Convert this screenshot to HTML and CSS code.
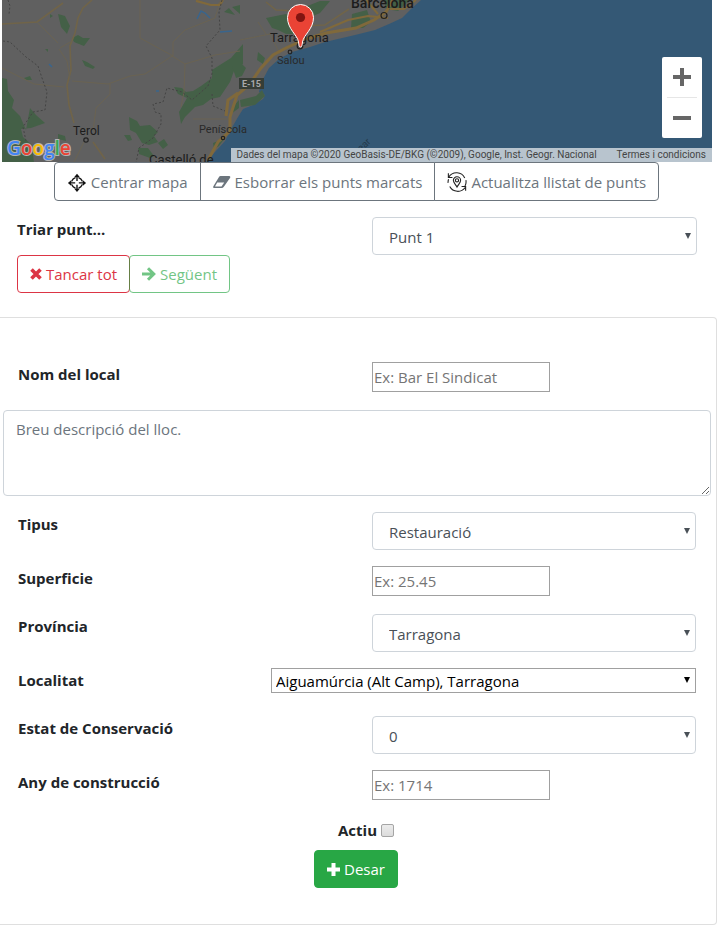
FILE: index.html
```html
<!DOCTYPE html>
<html lang="ca">
<head>
<meta charset="utf-8">
<meta name="viewport" content="width=device-width, initial-scale=1">
<title>Punts</title>
<link rel="stylesheet" href="styles.css">
</head>
<body>
<section class="map" aria-label="Mapa">
  <svg class="map-canvas" viewBox="2 0 710 162" preserveAspectRatio="xMinYMin slice">
    <rect x="2" width="1400" height="400" fill="#606060"/>
    <path fill="#345875" d="M206 162l9-10 10-11 5-10 8-14 5-8 10-4 10-6 2-4-6-3 2-9 8-15 10-9 13-7 18-5 15-5 30-7 20-5 14-6 13-6 9-9 10-9H1402V400H206z"/>
    <g fill="#446047">
      <path d="M2 78l5 1 1 12 6 9-2 8 8 8 6 14 4-22 6 7 9 8-14 5-10 1 2 8 9 8 2 18H2z"/>
      <path d="M58 14l7 2 5 10-3 8-6-7zM50 14l3 2-3 2zM72 38l6-3 5 3 7 0-6 8-10-4zM82 60l5 2 8 5-2 2-8-3zM24 78l6-2 2 4h-6zM45 49h3v3z"/>
      <path d="M174 87l8 1 4 4 7-1 8-5 11-8 0-8 11-7 8-5 12-14v20l-8 4-5 14-10 15-9 2-8 6-8 2-10 10-4 7-2-12 8-14-9-4z"/>
      <path d="M129 117l8 4 3 5 10-1 8 7-4 4 4 6-9 3-7-2-6-10-6-3zM124 135l6 0 2 5-4 1zM158 143l6-4 4 6-5 4zM138 148l10 0 6 8-4 2-11-4zM58 134l7 2 1 5-8-2z"/>
      <path d="M224 12l5-4 6 7zM232 7l8-2v9zM266 18l20-4 12 4 2 16-14 0-8-4-6-2zM300 9l20-8h10l-10 12-14 6zM352 14l15-4 4 12-8 6-12 0zM384 0h26l-12 11-12-2zM232 66l8-4 6 6-4 8-6 2zM258 52l7 6-2 6-6-4zM240 100l16-4 6-6 3 6-10 9-14 2zM232 108l7-8v8l-8 6zM213 143l12-5-6 8-5 3z"/>
    </g>
    <g fill="none" stroke="#706449" stroke-width="1">
      <path stroke-width="1.6" d="M92 0l-9 8-5 10-3 15-5 13 1 24-4 15 2 20 5 18M93 142l12 17M2 24l35-2 26-19M196 0l14 5 8 0 4-5M266 2l10 8 24 1M300 26l25-1 24-16"/>
      <path stroke="#6a6352" d="M37 22l21 21M60 48l12-7M59 49l8 12 3 18M140 0v38l33 18 0-14 12-12 30-12 5-16M172 56l13 8-1 28-3 15M172 56l-27 18-15 2-22 8-36-3M2 68l32 16 30 3M110 84v10l-14 14-3 23M185 64l30-9 25-4M193 119l36 0M84 142l-10 20M240 40l30-6 10 20M258 22l8 12"/>
    </g>
    <path fill="none" stroke="#80693b" stroke-width="3" d="M208 160l10-18 12-11 0-14 7-22 12-10 12-17 12-13 13-7 20-9 20-6 30-5 18-8 12-8 8-14M226 116l2-16 10-7"/>
    <path fill="none" stroke="#80693b" stroke-width="2" d="M196 1l15 4h9l3-5M320 32l28-12 20-4 20 2M390 9l14 0 12-9M366 0l12 14"/>
    <path fill="none" stroke="#444" stroke-width="1" stroke-dasharray="2 2" d="M8 0l2 6-1 8M3 41l7 1 16 15 12 9 4 12 5 14-2 18-12 2-10 15 3 14M222 0l-3 12 1 18-14 16 6 12 0 16-4 12-16 14-10-8-15-4-4 14-10 2 2 8 6 2 0 10-8 14-14 10-4 20M212 94l1 12 12 5"/>
    <g fill="none" stroke="#39658d" stroke-width="1.5"><path d="M197 19l4-8 4 2 5 5M220 32l12-1M49 64l3 3M156 91l3 0"/></g>
    <g fill="none" stroke="#222" stroke-width="1.2"><circle cx="86" cy="140" r="2.2"/><circle cx="223" cy="138" r="1.7"/><circle cx="290" cy="52" r="1.8"/><circle cx="300" cy="46" r="2.8"/><circle cx="384" cy="15.500" r="3"/></g>
    <rect x="239" y="78" width="25" height="11" fill="#363d36"/>
    <g class="map-names">
      <text x="242" y="87" class="road">E-15</text>
      <text x="73" y="135" class="town">Terol</text>
      <text x="199" y="133" class="small">Peníscola</text>
      <text x="277" y="64" class="small">Salou</text>
      <text x="270" y="42" class="city">Tarragona</text>
      <text x="351" y="8" class="city strong">Barcelona</text>
      <text x="149" y="164" class="city">Castelló de</text>
      <text x="361" y="152" class="sea" transform="rotate(-43 361 152)">ear</text>
    </g>
    <path fill="#ea4335" stroke="#fff" stroke-width="1" d="M300.500 47c-1.500 0-1.500-2-2-5-1-7-11-13-11-24.500a13 13 0 0 1 26 0C313.500 29 303.500 35 302.500 42c-.5 3-.5 5-2 5z"/>
    <circle cx="300.500" cy="17.500" r="4.600" fill="#811411"/>
    <text class="logo" x="7" y="155"><tspan fill="#4285f4">G</tspan><tspan fill="#ea4335">o</tspan><tspan fill="#fbbc05">o</tspan><tspan fill="#4285f4">g</tspan><tspan fill="#34a853">l</tspan><tspan fill="#ea4335">e</tspan></text>
  </svg>
  <div class="zoom">
    <button type="button" aria-label="Amplia"><svg width="18" height="18"><path d="M7 0h4v7h7v4h-7v7H7v-7H0V7h7z"/></svg></button>
    <button type="button" aria-label="Redueix"><svg width="18" height="18"><path d="M0 7h18v4H0z"/></svg></button>
  </div>
  <div class="credits"><span>Dades del mapa ©2020 GeoBasis-DE/BKG (©2009), Google, Inst. Geogr. Nacional</span><a href="#">Termes i condicions</a></div>
</section>

<div class="toolbar">
  <button type="button"><svg width="20" height="20" viewBox="-1 -2 22 22"><g fill="none" stroke="#111" stroke-width="1.500"><circle cx="10" cy="10" r="6"/></g><path stroke="#fff" stroke-width="3" d="M10 2v5M10 13v5M2 10h5M13 10h5"/><path stroke="#111" stroke-width="1.500" d="M10 2v6M10 12v6M2 10h6M12 10h6"/><path fill="#111" d="M10 0l3 3.500H7zM10 20l3-3.500H7zM0 10l3.500-3v6zM20 10l-3.500-3v6z"/></svg>Centrar mapa</button>
  <button type="button"><svg width="18" height="14" viewBox="0 0 18 14"><path fill="#6c757d" d="M7.500 1H16q2 0 1 2l-6 8.500Q10 13 8.500 13H1q-1.500 0-.5-2L6 2q.5-1 1.500-1z"/><path fill="#fff" d="M4.200 7.500h7L8.500 11.500H2z"/></svg>Esborrar els punts marcats</button>
  <button type="button"><svg width="20" height="20" viewBox="0 0 22 22" fill="none" stroke="#222" stroke-width="1.200"><path d="M2 5.500a10 10 0 0 1 17.500 1M20.800 9a10 10 0 0 1-1 6.500M20 17a10 10 0 0 1-17-1M1.200 12a10 10 0 0 1 .5-4M1.500 1.500v4.500H6M20.500 20.500V16H16"/><path d="M11 16.500c-1.500-3-4-4.500-4-7.300a4 4 0 0 1 8 0c0 2.800-2.500 4.300-4 7.300z"/><circle cx="11" cy="9.200" r="1.800"/></svg>Actualitza llistat de punts</button>
</div>

<div class="picker">
  <div>
    <label for="punt">Triar punt...</label>
    <div class="actions">
      <button type="button" class="btn danger"><svg width="12" height="12" viewBox="0 0 12 12"><path fill="none" stroke="currentColor" stroke-width="3.600" d="M1.500 1.500l9 9M10.500 1.500l-9 9"/></svg>Tancar tot</button><button type="button" class="btn next" disabled><svg width="14" height="14" viewBox="0 0 14 14"><path fill="none" stroke="currentColor" stroke-width="3" d="M0 7h11M6 1.200L11.800 7 6 12.800"/></svg>Següent</button>
    </div>
  </div>
  <div class="control"><div class="select"><select id="punt"><option>Punt 1</option></select></div></div>
</div>

<form class="card">
  <div class="row"><label for="nom">Nom del local</label><div class="control"><input type="text" id="nom" placeholder="Ex: Bar El Sindicat"></div></div>
  <textarea aria-label="Descripció" placeholder="Breu descripció del lloc."></textarea>
  <div class="row"><label for="tipus">Tipus</label><div class="control"><div class="select"><select id="tipus"><option>Restauració</option></select></div></div></div>
  <div class="row"><label for="sup">Superficie</label><div class="control"><input type="text" id="sup" placeholder="Ex: 25.45"></div></div>
  <div class="row"><label for="prov">Província</label><div class="control"><div class="select"><select id="prov"><option>Tarragona</option></select></div></div></div>
  <div class="row wide"><label for="loc">Localitat</label><div class="select plain"><select id="loc"><option>Aiguamúrcia (Alt Camp), Tarragona</option></select></div></div>
  <div class="row"><label for="estat">Estat de Conservació</label><div class="control"><div class="select"><select id="estat"><option>0</option></select></div></div></div>
  <div class="row"><label for="any">Any de construcció</label><div class="control"><input type="text" id="any" placeholder="Ex: 1714"></div></div>
  <div class="submit">
    <div class="check"><label for="actiu">Actiu</label><input type="checkbox" id="actiu"></div>
    <button type="button" class="btn save"><svg width="13" height="13" viewBox="0 0 13 13"><path fill="currentColor" d="M4.500 0h4v4.500H13v4H8.500V13h-4V8.500H0v-4h4.500z"/></svg>Desar</button>
  </div>
</form>
</body>
</html>
```
FILE: styles.css
```css
* { box-sizing: border-box; }
body {
  margin: 0;
  padding-right: 4px;
  background: #fff;
  color: #212529;
  font: 15px/24px "Open Sans", "Noto Sans", sans-serif;
}
button, input, select, textarea { font: inherit; }
button { cursor: pointer; }
label { font-weight: 700; }

.map {
  position: relative;
  height: 162px;
  margin: 0 5px 0 2px;
  overflow: hidden;
  font-family: Roboto, sans-serif;
}
.map-canvas { display: block; width: 100%; height: 100%; }
.map-names { fill: #1c1c1c; }
.town { font-size: 12px; }
.small { font-size: 11px; fill: #292929; }
.city { font-size: 13px; }
.strong { font-size: 14px; font-weight: 500; }
.sea { font-size: 10px; fill: #24394a; }
.road { font-size: 9px; font-weight: 700; fill: #aaa; }
.logo {
  font: 600 19px "Open Sans", sans-serif;
  stroke: #b4b4b4;
  stroke-width: 2px;
  paint-order: stroke;
}
.zoom {
  position: absolute;
  right: 10px;
  top: 57px;
  width: 40px;
  padding: 0 5px;
  background: #fff;
  border-radius: 2px;
}
.zoom button {
  display: grid;
  place-items: center;
  width: 100%;
  height: 40px;
  padding: 0;
  border: 0;
  background: none;
}
.zoom button + button { height: 41px; border-top: 1px solid #e6e6e6; }
.zoom path { fill: #666; }
.credits {
  position: absolute;
  right: 0;
  bottom: 0;
  display: flex;
  gap: 20px;
  padding: 0 6px 0 5px;
  background: #b8c4ce;
  color: #444;
  font-size: 10px;
  line-height: 14px;
  white-space: nowrap;
}
.credits a { color: inherit; text-decoration: none; }

.toolbar { display: flex; justify-content: center; padding-right: 4px; }
.toolbar button {
  display: flex;
  align-items: center;
  gap: 4px;
  height: 39px;
  padding: 0 12px;
  border: 1px solid #6c757d;
  background: #fff;
  color: #6c757d;
  white-space: nowrap;
}
.toolbar button + button { margin-left: -1px; }
.toolbar button:first-child { border-radius: 4px 0 0 4px; }
.toolbar button:last-child { border-radius: 0 4px 4px 0; }

.picker {
  display: grid;
  grid-template-columns: 1fr 1fr;
  padding: 16px 20px 24px 17px;
}
.picker label { display: block; }
.actions { display: flex; margin-top: 14px; }
.btn {
  display: inline-flex;
  align-items: center;
  gap: 4px;
  height: 38px;
  padding: 0 12px;
  border: 1px solid;
  border-radius: 4px;
  background: #fff;
  white-space: nowrap;
}
.danger { color: #dc3545; }
.next { margin-left: -1px; color: #28a745; opacity: .65; }
.save { background: #28a745; border-color: #28a745; color: #fff; }

.control { padding-left: 15px; }
.select { position: relative; }
.select::after {
  content: "";
  position: absolute;
  right: 6px;
  top: 16px;
  border: solid transparent;
  border-width: 6px 3px 0;
  border-top-color: #495057;
  pointer-events: none;
}
.select select {
  display: block;
  appearance: none;
  width: 100%;
  height: 38px;
  padding: 2px 16px 0;
  border: 1px solid #ced4da;
  border-radius: 4px;
  background: #fff;
  color: #495057;
}
.plain::after { top: 9px; border-top-color: #000; }
.plain select {
  height: 25px;
  padding: 0 4px;
  border-color: #a0a0a0;
  border-radius: 0;
  color: #000;
}

.card {
  display: flex;
  flex-direction: column;
  gap: 16px;
  padding: 44px 0 36px;
  border: 1px solid #dfdfdf;
  border-left: 0;
  border-radius: 0 4px 4px 0;
}
.row {
  display: grid;
  grid-template-columns: 1fr 1fr;
  align-items: start;
  min-height: 32px;
  padding: 0 20px 0 18px;
}
.wide { grid-template-columns: 253px 1fr; }
.row input {
  display: block;
  width: 178px;
  height: 30px;
  padding: 1px;
  border: 1px solid #a0a0a0;
}
.row input::placeholder { color: #757575; }
textarea {
  display: block;
  height: 86px;
  margin: 0 5px 0 3px;
  padding: 6px 12px;
  border: 1px solid #ced4da;
  border-radius: 4px;
  resize: vertical;
}
textarea::placeholder { color: #6c757d; }
.submit {
  display: flex;
  flex-direction: column;
  align-items: center;
  gap: 8px;
  padding-right: 4px;
}
.check { display: flex; align-items: center; gap: 4px; padding-left: 20px; }
.check input {
  appearance: none;
  width: 13px;
  height: 13px;
  margin: 0;
  border: 1px solid #a5a5a5;
  border-radius: 2px;
  background: linear-gradient(#ececec, #dcdcdc);
}
.check input:checked { background: #28a745; }
```
